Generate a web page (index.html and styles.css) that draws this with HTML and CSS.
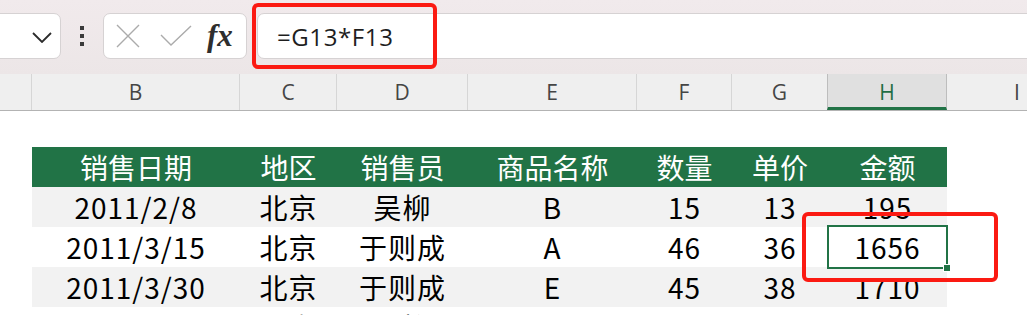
FILE: index.html
```html
<!DOCTYPE html>
<html lang="zh-CN">
    <head>
        <meta charset="UTF-8">
        <title>销售记录</title>
        <link rel="stylesheet" href="styles.css">
    </head>
    <body>
        <div class="formula-bar">
            <div class="name-box">
                <svg class="chevron" width="20" height="11" viewBox="0 0 20 11">
                    <path d="M1 1 L10 10 L19 1" fill="none" stroke="#2b2b2b" stroke-width="1.8"/>
                </svg>
            </div>
            <div class="grip"><span></span><span></span><span></span></div>
            <div class="fx-box">
                <svg width="24" height="24" viewBox="0 0 24 24">
                    <path d="M1 1 L23 23 M23 1 L1 23" stroke="#ababab" stroke-width="1.4" fill="none"/>
                </svg>
                <svg width="32" height="22" viewBox="0 0 32 22">
                    <path d="M1 10 L11 20 L31 1" stroke="#ababab" stroke-width="1.4" fill="none"/>
                </svg>
                <span class="fx">fx</span>
            </div>
            <div class="formula-input">
                <span class="formula">=G13*F13</span>
                <div class="mark mark-formula"></div>
            </div>
        </div>

        <div class="col-heads">
            <div class="corner"></div>
            <div>B</div>
            <div>C</div>
            <div>D</div>
            <div>E</div>
            <div>F</div>
            <div>G</div>
            <div class="selected">H</div>
            <div class="last">I</div>
        </div>

        <div class="sheet">
            <div class="row head">
                <div class="gutter"></div>
                <div>销售日期</div>
                <div>地区</div>
                <div>销售员</div>
                <div>商品名称</div>
                <div>数量</div>
                <div>单价</div>
                <div>金额</div>
            </div>
            <div class="row shade">
                <div class="gutter"></div>
                <div>2011/2/8</div>
                <div>北京</div>
                <div>吴柳</div>
                <div>B</div>
                <div>15</div>
                <div>13</div>
                <div>195</div>
            </div>
            <div class="row">
                <div class="gutter"></div>
                <div>2011/3/15</div>
                <div>北京</div>
                <div>于则成</div>
                <div>A</div>
                <div>46</div>
                <div>36</div>
                <div class="active">1656
                    <div class="cursor"><span class="handle"></span></div>
                    <div class="mark mark-cell"></div>
                </div>
            </div>
            <div class="row shade">
                <div class="gutter"></div>
                <div>2011/3/30</div>
                <div>北京</div>
                <div>于则成</div>
                <div>E</div>
                <div>45</div>
                <div>38</div>
                <div>1710</div>
            </div>
            <div class="row">
                <div class="gutter"></div>
                <div>2011/4/2</div>
                <div>北京</div>
                <div>吴柳</div>
                <div>C</div>
                <div>20</div>
                <div>12</div>
                <div>240</div>
            </div>
        </div>
    </body>
</html>
```

FILE: styles.css
```css
* {
    margin: 0; padding: 0; box-sizing: border-box;
}

html, body {
    width: 100%;
    height: 100%;
    background-color: white;
    overflow: hidden;
    font-family: "Noto Sans CJK SC", sans-serif;
}

/* top bar: name box, grip, buttons, formula input */
.formula-bar {
    height: 74px;
    background: linear-gradient(#f1eaec, #ece6e7);
    display: flex;
    align-items: flex-start;
    padding-top: 13px;
}

.name-box {
    width: 80px;
    height: 46px;
    margin-left: -19px;
    background: white;
    border: 1px solid #d6d2d3;
    border-radius: 7px;
    display: flex;
    align-items: center;
    justify-content: flex-end;
    padding-right: 8px;
    padding-top: 2px;
}

.grip {
    width: 42px;
    height: 46px;
    display: flex;
    flex-direction: column;
    align-items: center;
    justify-content: center;
    gap: 4px;
}

.grip span {
    width: 4px;
    height: 4px;
    background: #3a3a3a;
}

.fx-box {
    width: 144px;
    height: 46px;
    background: white;
    border: 1px solid #d6d2d3;
    border-radius: 7px;
    display: flex;
    align-items: center;
    padding-left: 12px;
    gap: 21px;
}

.fx-box svg:nth-child(2) {
    margin-left: -1px;
}

.fx {
    font-family: "Liberation Serif", serif;
    font-style: italic;
    font-weight: bold;
    font-size: 31px;
    color: #2e2e2e;
    margin-left: -6px;
    letter-spacing: 0;
    line-height: 1;
    padding-bottom: 2px;
}

.formula-input {
    position: relative;
    flex: 1;
    height: 46px;
    margin-left: 10px;
    margin-right: -20px;
    background: white;
    border: 1px solid #d6d2d3;
    border-radius: 7px;
    display: flex;
    align-items: center;
    padding-left: 19px;
}

.formula {
    font-family: "Open Sans", sans-serif;
    font-size: 24px;
    color: #1e1e1e;
    letter-spacing: 0.6px;
}

/* red annotation frames */
.mark {
    position: absolute;
    border: 4px solid #fb1a12;
    border-radius: 6px;
    pointer-events: none;
}

.mark-formula {
    left: -6px;
    top: -11px;
    width: 185px;
    height: 66px;
}

.mark-cell {
    left: -26px;
    top: -15px;
    width: 196px;
    height: 70px;
}

/* column letters */
.col-heads {
    display: grid;
    grid-template-columns: 32px 208px 97px 131px 169px 95px 96px 119px 1fr;
    height: 37px;
    background: #efefef;
    border-bottom: 1px solid #b3b3b3;
    font-family: "Open Sans", sans-serif;
    font-size: 21px;
    color: #454545;
}

.col-heads div {
    display: flex;
    align-items: center;
    justify-content: center;
    border-right: 1px solid #d6d6d6;
}

.col-heads .corner {
    border-right: 1px solid #d6d6d6;
}

.col-heads .selected {
    background: #e0e0e0;
    color: #1f6e44;
    border-left: 1px solid #bdbdbd;
    border-right: 1px solid #bdbdbd;
    border-bottom: 3px solid #217346;
    margin-left: -1px;
    padding-top: 3px;
}

.col-heads .last {
    border-right: none;
    padding-left: 60px;
}

/* worksheet table */
.sheet {
    padding-top: 36px;
}

.row {
    display: grid;
    grid-template-columns: 32px 208px 97px 131px 169px 95px 96px 119px;
    height: 40px;
    font-size: 28px;
    letter-spacing: 1px;
    color: #000;
}

.row div {
    display: flex;
    align-items: center;
    justify-content: center;
}

.row .gutter {
    background: white;
}

.row.head {
    letter-spacing: 0;
}

.row.head div:not(.gutter) {
    background: #217346;
    color: white;
}

.row.shade div:not(.gutter) {
    background: #f2f2f2;
}

.row .active {
    position: relative;
}

.cursor {
    position: absolute;
    left: -1px;
    top: -2px;
    right: -1px;
    bottom: -2px;
    border: 2px solid #217346;
}

.handle {
    position: absolute;
    right: -5px;
    bottom: -5px;
    width: 8px;
    height: 8px;
    background: #217346;
    border: 1px solid white;
}
```
